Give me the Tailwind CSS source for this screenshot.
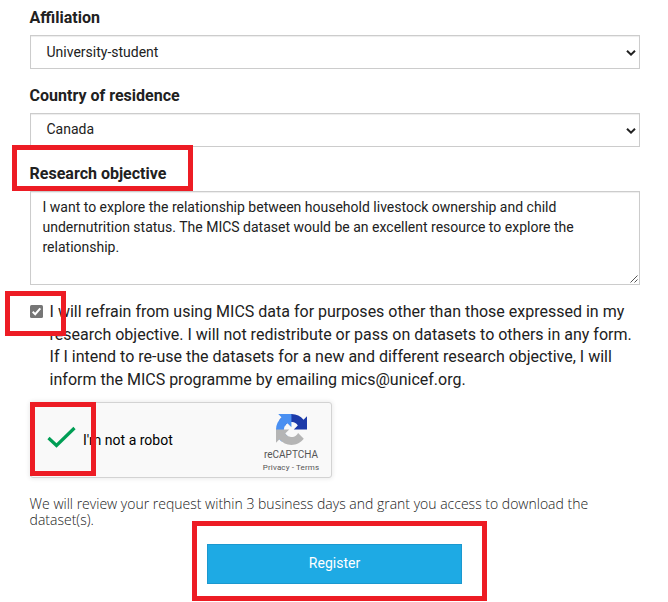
<!DOCTYPE html>
<html lang="en">
<head>
<meta charset="utf-8">
<title>Dataset access request</title>
<script src="https://cdn.jsdelivr.net/npm/@tailwindcss/browser@4"></script>
</head>
<body class="bg-white text-[#212121] font-[Roboto,sans-serif] overflow-hidden">
<form class="relative w-[668px] h-[602px] pl-[30px] pr-7 pt-[6px] flex flex-col items-stretch overflow-hidden">
  <label class="-ml-[0.4px] h-[29px] shrink-0 text-base leading-6 font-bold">Affiliation</label>
  <div class="h-[34px] shrink-0 border border-[#ccc] shadow-[inset_0_1px_1px_rgba(0,0,0,0.075)] flex items-center justify-between pl-[15.5px] pr-[3px] text-sm">
    <span>University-student</span>
    <svg class="w-[10px] h-[6px] mt-px" viewBox="0 0 10 6" fill="none" stroke="#212121" stroke-width="2"><path d="M1 .8 5 4.6 9 .8"/></svg>
  </div>
  <label class="-ml-[0.4px] h-[29px] shrink-0 mt-[15px] text-base leading-6 font-bold">Country of residence</label>
  <div class="h-[34px] shrink-0 border border-[#ccc] shadow-[inset_0_1px_1px_rgba(0,0,0,0.075)] flex items-center justify-between pl-[15.5px] pr-[3px] text-sm">
    <span class="-mt-0.5">Canada</span>
    <svg class="w-[10px] h-[6px] mt-px" viewBox="0 0 10 6" fill="none" stroke="#212121" stroke-width="2"><path d="M1 .8 5 4.6 9 .8"/></svg>
  </div>
  <label class="-ml-[0.4px] h-[29px] shrink-0 mt-[15px] text-base leading-6 font-bold">Research objective</label>
  <div class="h-[94px] shrink-0 border border-[#ccc] shadow-[inset_0_1px_1px_rgba(0,0,0,0.075)] flex justify-between pl-[11.5px] pt-[5px] pr-px pb-px text-sm leading-5 whitespace-nowrap">
    <p>I want to explore the relationship between household livestock ownership and child<br>undernutrition status. The MICS dataset would be an excellent resource to explore the<br>relationship.</p>
    <svg class="w-2 h-2 self-end shrink-0" viewBox="0 0 8 8" stroke="#555" stroke-width="1"><path d="M.5 7.5 7.5 .5M4.5 7.5 7.5 4.5"/></svg>
  </div>
  <div class="mt-[15px] h-[92px] shrink-0 flex gap-[6.6px] text-base leading-[22.6px] whitespace-nowrap">
    <svg class="w-[13px] h-[13px] mt-[5px] shrink-0" viewBox="0 0 13 13"><rect width="13" height="13" rx="1.5" fill="#767676"/><path d="M2.7 6.8 5.2 9.2 10.3 3.3" fill="none" stroke="#fff" stroke-width="2"/></svg>
    <p class="pt-px">I will refrain from using MICS data for purposes other than those expressed in my<br>research objective. I will not redistribute or pass on datasets to others in any form.<br>If I intend to re-use the datasets for a new and different research objective, I will<br>inform the MICS programme by emailing mics@unicef.org.</p>
  </div>
  <div class="mt-[10px] w-[302px] h-[76px] shrink-0 rounded-[3px] border border-[#d3d3d3] bg-[#f9f9f9] shadow-[0_0_4px_1px_rgba(0,0,0,0.08)] flex items-center justify-between pl-[17px] pr-[9px]">
    <div class="flex items-center text-sm">
      <svg class="w-[30px] h-[24px] mr-[6px] -ml-px -mt-[7px]" viewBox="0 0 30 24" fill="none" stroke="#009e55" stroke-width="3.2"><path d="M1.5 13 9.5 20.5 27.5 3"/></svg>
      <span class="text-black">I'm not a robot</span>
    </div>
    <div class="flex flex-col items-center w-[62px] text-[#555] whitespace-nowrap">
      <svg class="w-[31px] h-[31px] mt-[5px]" viewBox="0 0 64 64">
        <path fill="#1c3aa9" d="M64 31.955a33 33 0 0 0-.016-1.375V4.687l-7.158 7.158C50.967 4.674 42.055.093 32.074.093c-10.387 0-19.614 4.96-25.449 12.641l11.733 11.857a15.55 15.55 0 0 1 4.754-5.334c2.05-1.6 4.953-2.906 8.964-2.906.485 0 .859.057 1.133.163 4.969.392 9.276 3.134 11.812 7.114l-8.305 8.305 27.284.022"/>
        <path fill="#4a90f2" d="M31.862.094a34 34 0 0 0-1.375.016H4.594l7.158 7.158C4.581 13.127 0 22.039 0 32.02c0 10.387 4.96 19.614 12.641 25.449l11.857-11.733a15.55 15.55 0 0 1-5.334-4.754c-1.6-2.05-2.906-4.953-2.906-8.964 0-.485.057-.859.163-1.133.392-4.969 3.134-9.276 7.114-11.812l8.305 8.305.022-27.284"/>
        <path fill="#b5b5b5" d="M.001 31.955q.001.69.016 1.375v25.893l7.158-7.158c5.859 7.171 14.771 11.752 24.752 11.752 10.387 0 19.614-4.96 25.449-12.641L45.643 39.319a15.55 15.55 0 0 1-4.754 5.334c-2.05 1.6-4.953 2.906-8.964 2.906-.485 0-.859-.057-1.133-.163-4.969-.392-9.276-3.134-11.812-7.114l8.305-8.305-27.284-.022"/>
      </svg>
      <span class="text-[10px] leading-[12px] mt-[4px]">reCAPTCHA</span>
      <span class="text-[8px] tracking-[0.13px] leading-[10px] mt-[2px] -mb-px">Privacy - Terms</span>
    </div>
  </div>
  <p class="-ml-[0.4px] mt-[17.5px] text-sm leading-4 font-light font-['Open_Sans',sans-serif] whitespace-nowrap">We will review your request within 3 business days and grant you access to download the<br>dataset(s).</p>
  <button type="button" class="mt-[16.5px] ml-[177px] w-[255px] h-10 pb-0.5 shrink-0 border border-[#1b98cf] bg-[#1eaae4] text-white text-sm">Register</button>

  <div class="absolute left-3 top-[145px] w-[181px] h-[46px] border-5 border-[#ed1c24]"></div>
  <div class="absolute left-[5px] top-[291px] w-[61px] h-[45px] border-5 border-[#ed1c24]"></div>
  <div class="absolute left-[30px] top-[402px] w-[66px] h-[74px] border-5 border-[#ed1c24]"></div>
  <div class="absolute left-[192px] top-[521px] w-[295px] h-[80px] border-5 border-[#ed1c24]"></div>
</form>
</body>
</html>
